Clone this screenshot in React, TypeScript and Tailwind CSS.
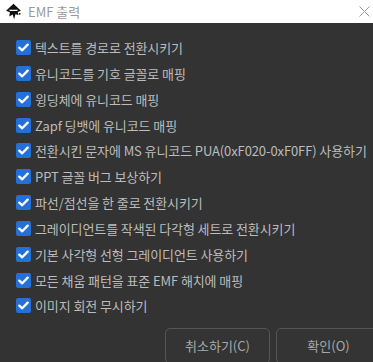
import React from 'react';

const options = [
  '텍스트를 경로로 전환시키기',
  '유니코드를 기호 글꼴로 매핑',
  '윙딩체에 유니코드 매핑',
  'Zapf 딩뱃에 유니코드 매핑',
  '전환시킨 문자에 MS 유니코드 PUA(0xF020-0xF0FF) 사용하기',
  'PPT 글꼴 버그 보상하기',
  '파선/점선을 한 줄로 전환시키기',
  '그레이디언트를 작색된 다각형 세트로 전환시키기',
  '기본 사각형 선형 그레이디언트 사용하기',
  '모든 채움 패턴을 표준 EMF 해치에 매핑',
  '이미지 회전 무시하기',
];

const font = { fontFamily: '"Noto Sans CJK KR", "Noto Sans", sans-serif' };

const InkscapeIcon = () => (
  <svg width="17" height="17" viewBox="0 0 16 16">
    <path d="M8 0.8 L15 7.2 L12 8.4 L12.6 11.2 L9.8 10.6 L8.6 15.2 L7.2 10.8 L4 12.6 L4.6 8.6 L1 7.2 Z" fill="#111" />
    <path d="M3.6 6.4 L12.4 6.4 L11.2 7.6 L4.8 7.6 Z" fill="#fff" />
    <circle cx="13.8" cy="10.2" r="0.9" fill="#111" />
  </svg>
);

const Check = () => (
  <div className="w-[15px] h-[15px] rounded-[2px] bg-[#2470d8] flex items-center justify-center shrink-0">
    <svg width="11" height="9" viewBox="0 0 11 9">
      <path d="M1.3 4.6 L4.2 7.3 L9.7 1.6" stroke="#fff" strokeWidth="2.3" fill="none" strokeLinecap="round" strokeLinejoin="round" />
    </svg>
  </div>
);

export default function App() {
  return (
    <div className="w-[373px] h-[362px] overflow-hidden flex flex-col bg-[#333333]" style={font}>
      <div className="h-[23px] bg-white flex items-center pl-[5px] pr-[2px] shrink-0">
        <InkscapeIcon />
        <span className="ml-[6px] text-[13px] text-[#9a9a9a]">EMF 출력</span>
        <div className="flex-1" />
        <svg width="11" height="11" viewBox="0 0 11 11" className="mr-[1px]">
          <path d="M0.5 0.5 L10.5 10.5 M10.5 0.5 L0.5 10.5" stroke="#9a9a9a" strokeWidth="1" />
        </svg>
      </div>
      <div className="flex flex-col pt-[11.6px] pl-[16px]">
        {options.map((o) => (
          <div key={o} className="h-[25.85px] flex items-center gap-[4px]">
            <Check />
            <span className="text-[13px] text-[#bcbcbc] whitespace-nowrap leading-none tracking-[-0.1px]">{o}</span>
          </div>
        ))}
      </div>
      <div className="flex gap-[6px] mt-[9px] pl-[165px]">
        <button className="w-[105px] h-[36px] shrink-0 rounded-[5px] border border-[#555555] bg-[#343434] text-[13px] text-[#a8a8a8]">취소하기(C)</button>
        <button className="w-[105px] h-[36px] shrink-0 rounded-[5px] border border-[#555555] bg-[#343434] text-[13px] text-[#a8a8a8]">확인(O)</button>
      </div>
    </div>
  );
}
